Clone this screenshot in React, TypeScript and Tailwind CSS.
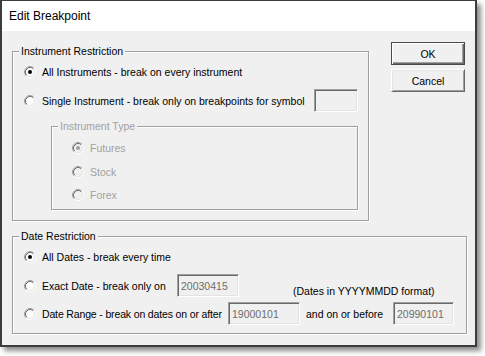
import React from 'react';

// Classic Win32 "Edit Breakpoint" dialog

const Radio: React.FC<{ checked?: boolean; disabled?: boolean }> = ({ checked = false, disabled = false }) => (
  <svg width="12" height="12" viewBox="0 0 12 12" className="shrink-0">
    <path d="M2.11 9.89A5.5 5.5 0 0 1 9.89 2.11" fill="none" stroke="#a0a0a0" />
    <path d="M9.89 2.11A5.5 5.5 0 0 1 2.11 9.89" fill="none" stroke="#ffffff" />
    <circle cx="6" cy="6" r="4" fill={disabled ? '#f0f0f0' : '#ffffff'} />
    <path d="M2.82 9.18A4.5 4.5 0 0 1 9.18 2.82" fill="none" stroke="#696969" />
    <path d="M9.18 2.82A4.5 4.5 0 0 1 2.82 9.18" fill="none" stroke="#e3e3e3" />
    {checked && <circle cx="6" cy="6" r="2" fill={disabled ? '#a0a0a0' : '#000000'} />}
  </svg>
);

const Option: React.FC<{ label: string; checked?: boolean; disabled?: boolean; labelClass?: string; className?: string }> = ({
  label,
  checked,
  disabled,
  labelClass = '',
  className = '',
}) => (
  <div className={`flex items-center gap-[6px] ${className}`}>
    <Radio checked={checked} disabled={disabled} />
    <span className={`whitespace-nowrap ${disabled ? 'text-[#a0a0a0]' : 'text-black'} ${labelClass}`}>{label}</span>
  </div>
);

const GroupBox: React.FC<{ title: string; disabled?: boolean; className?: string; children: React.ReactNode }> = ({
  title,
  disabled,
  className = '',
  children,
}) => (
  <fieldset className={`border border-[#a0a0a0] shadow-[inset_1px_1px_0_#ffffff,1px_1px_0_#ffffff] ${className}`}>
    <legend className={`ml-[6px] px-[2px] bg-[#f0f0f0] leading-[12px] ${disabled ? 'text-[#a0a0a0]' : 'text-black'}`}>
      {title}
    </legend>
    {children}
  </fieldset>
);

const TextBox: React.FC<{ value?: string; className?: string }> = ({ value = '', className = '' }) => (
  <div
    className={`h-[23px] shrink-0 bg-[#f0f0f0] border border-t-[#a0a0a0] border-l-[#a0a0a0] border-b-white border-r-white shadow-[inset_1px_1px_0_#696969,inset_-1px_-1px_0_#e3e3e3] pl-[3px] flex items-center text-[#6d6d6d] ${className}`}
  >
    {value}
  </div>
);

export default function App() {
  return (
    <div className="w-[485px] h-[356px] bg-white font-['Liberation_Sans',Arial,sans-serif]">
      <div className="w-[477px] h-[347px] border-x-2 border-b-2 border-t border-[#3c3c3c] bg-[#f0f0f0] shadow-[4px_4px_5px_rgba(0,0,0,0.45)] flex flex-col">
        {/* Title bar */}
        <div className="h-[30px] shrink-0 bg-white flex items-center pl-[7px] text-[12px] text-black">Edit Breakpoint</div>

        {/* Body */}
        <div className="flex-1 pl-[10px] pt-[11px] text-[10.5px] leading-[12px] text-black">
          <div className="flex items-start">
            <GroupBox title="Instrument Restriction" className="w-[356px] mt-[3px]">
              <div className="pl-[11px] pr-[10px] pt-[5px] pb-[10px]">
                <Option label="All Instruments - break on every instrument" checked className="h-[20px]" />
                <div className="mt-[7px] h-[23px] flex items-center">
                  <Option label="Single Instrument - break only on breakpoints for symbol" />
                  <TextBox className="ml-auto w-[44px]" />
                </div>
                <GroupBox title="Instrument Type" disabled className="mt-[8px] ml-[27px] w-[307px]">
                  <div className="pl-[20px] pt-[6px] pb-[4px] flex flex-col">
                    <Option label="Futures" checked disabled className="h-[20px]" />
                    <Option label="Stock" disabled className="h-[20px] mt-[4px]" />
                    <Option label="Forex" disabled className="h-[20px] mt-[3px]" />
                  </div>
                </GroupBox>
              </div>
            </GroupBox>

            <div className="ml-[22px] flex flex-col gap-[4px]">
              <button className="w-[74px] h-[23px] border border-[#4a4a4a] bg-[#f0f0f0] shadow-[inset_1px_1px_0_#ffffff,inset_-1px_-1px_0_#696969,inset_-2px_-2px_0_#a0a0a0] text-black">
                OK
              </button>
              <button className="w-[74px] h-[23px] border border-t-white border-l-white border-b-[#696969] border-r-[#696969] bg-[#f0f0f0] shadow-[inset_1px_1px_0_#e3e3e3,inset_-1px_-1px_0_#a0a0a0] text-black">
                Cancel
              </button>
            </div>
          </div>

          <GroupBox title="Date Restriction" className="w-[455px] mt-[9px]">
            <div className="pl-[11px] pt-[5px] pb-[8px]">
              <Option label="All Dates - break every time" checked className="h-[20px]" />
              <div className="mt-[7px] h-[23px] flex items-center">
                <Option label="Exact Date - break only on" labelClass="w-[135px]" />
                <TextBox value="20030415" className="w-[62px]" />
                <span className="ml-[54px] self-end whitespace-nowrap">(Dates in YYYYMMDD format)</span>
              </div>
              <div className="mt-[5px] h-[23px] flex items-center">
                <Option label="Date Range - break on dates on or after" labelClass="w-[186px] tracking-[-0.15px]" />
                <TextBox value="19000101" className="w-[72px]" />
                <span className="ml-[6px] w-[87px] whitespace-nowrap">and on or before</span>
                <TextBox value="20990101" className="w-[61px]" />
              </div>
            </div>
          </GroupBox>
        </div>
      </div>
    </div>
  );
}
